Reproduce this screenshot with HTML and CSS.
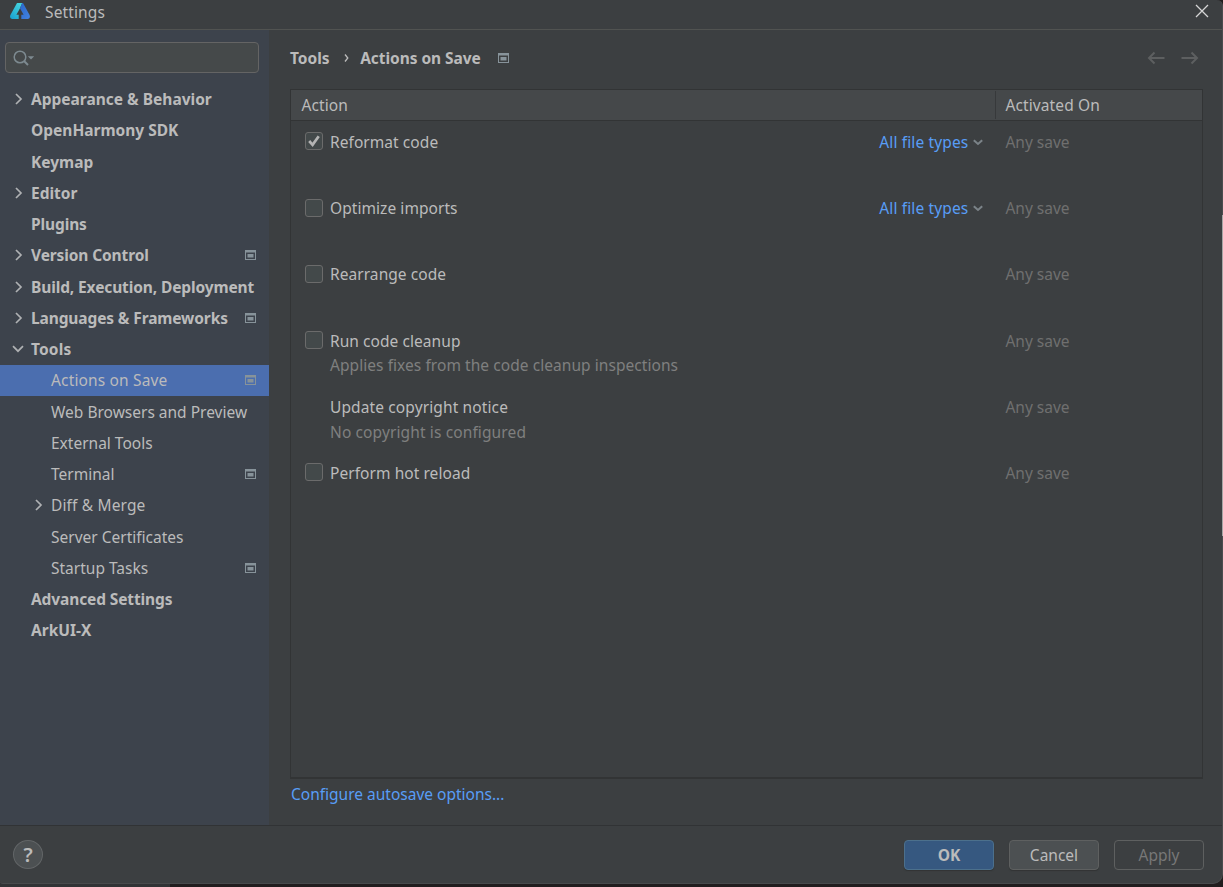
FILE: index.html
```html
<!DOCTYPE html>
<html lang="en">
<head>
<meta charset="utf-8">
<title>Settings</title>
<link rel="stylesheet" href="styles.css">
</head>
<body>
<svg class="defs" width="0" height="0">
  <symbol id="right" viewBox="0 0 10 12"><path d="M2 1 7 6 2 11" fill="none" stroke="currentColor" stroke-width="1.700"/></symbol>
  <symbol id="down" viewBox="0 0 12 8"><path d="M1 1.200 6 6.200 11 1.200" fill="none" stroke="currentColor" stroke-width="1.700"/></symbol>
  <symbol id="small-down" viewBox="0 0 10 7"><path d="M.8 1.200 5 5 9.200 1.200" fill="none" stroke="currentColor" stroke-width="2"/></symbol>
  <symbol id="project" viewBox="0 0 11 10"><path fill-rule="evenodd" d="M0 0H11V10H0ZM1 2.500V9H10V2.500Z" fill="currentColor"/><rect x="2.500" y="4" width="6" height="3.500" fill="currentColor"/></symbol>
</svg>
<div class="window">
  <header class="titlebar">
    <svg class="logo" viewBox="0 0 20 17">
      <defs>
        <linearGradient id="cyan" x1="0" y1="1" x2=".7" y2="0"><stop offset="0" stop-color="#189fd0"/><stop offset="1" stop-color="#43d2dc"/></linearGradient>
        <linearGradient id="blue" x1="0" y1="0" x2="1" y2="1"><stop offset="0" stop-color="#2a66c8"/><stop offset="1" stop-color="#4283e2"/></linearGradient>
      </defs>
      <path d="M7 0H12.200L10 5.200 6.400 11.800H8.700V16H2Q-.8 15.200 .4 12Z" fill="url(#cyan)"/>
      <path d="M10 5.200 12.200 0H13L19.600 12Q20.700 15.200 18 16H11.300V11.800H13.600Z" fill="url(#blue)"/>
    </svg>
    <span class="title">Settings</span>
    <svg class="close" viewBox="0 0 14 14"><path d="M1 1 13 13M13 1 1 13" stroke="#d6d6d6" stroke-width="1.300"/></svg>
  </header>
  <div class="body">
    <aside class="sidebar">
      <div class="search">
        <svg viewBox="0 0 22 16"><circle cx="7" cy="7" r="5.800" fill="none" stroke="#7d8a90" stroke-width="1.500"/><path d="M11 11 15 15" stroke="#7d8a90" stroke-width="1.900"/><path d="M14.800 6.200H21.200L18 9.500Z" fill="#7d8a90"/></svg>
      </div>
      <nav class="tree">
        <div class="item"><svg class="arrow"><use href="#right"/></svg><span>Appearance &amp; Behavior</span></div>
        <div class="item"><span>OpenHarmony SDK</span></div>
        <div class="item"><span>Keymap</span></div>
        <div class="item"><svg class="arrow"><use href="#right"/></svg><span>Editor</span></div>
        <div class="item tight"><span>Plugins</span></div>
        <div class="item tight"><svg class="arrow"><use href="#right"/></svg><span>Version Control</span><svg class="badge"><use href="#project"/></svg></div>
        <div class="item tight"><svg class="arrow"><use href="#right"/></svg><span>Build, Execution, Deployment</span></div>
        <div class="item tight"><svg class="arrow"><use href="#right"/></svg><span>Languages &amp; Frameworks</span><svg class="badge"><use href="#project"/></svg></div>
        <div class="item loose"><svg class="arrow open"><use href="#down"/></svg><span>Tools</span></div>
        <div class="item child selected loose"><span>Actions on Save</span><svg class="badge"><use href="#project"/></svg></div>
        <div class="item child"><span>Web Browsers and Preview</span></div>
        <div class="item child"><span>External Tools</span></div>
        <div class="item child"><span>Terminal</span><svg class="badge"><use href="#project"/></svg></div>
        <div class="item child loose"><svg class="arrow"><use href="#right"/></svg><span>Diff &amp; Merge</span></div>
        <div class="item child"><span>Server Certificates</span></div>
        <div class="item child"><span>Startup Tasks</span><svg class="badge"><use href="#project"/></svg></div>
        <div class="item tight"><span>Advanced Settings</span></div>
        <div class="item"><span>ArkUI-X</span></div>
      </nav>
    </aside>
    <main class="content">
      <div class="crumbs">
        <span>Tools</span>
        <svg class="sep" viewBox="0 0 5 8"><path d="M1 .5 3.800 4 1 7.500" fill="none" stroke="#bbb" stroke-width="1.300"/></svg>
        <span class="page">Actions on Save</span>
        <svg class="badge"><use href="#project"/></svg>
        <svg class="history" viewBox="0 0 52 14"><path d="M17.500 7H2M7.500 1.500 2 7 7.500 12.500M34.500 7H50M44.500 1.500 50 7 44.500 12.500" fill="none" stroke="#5d5f60" stroke-width="2"/></svg>
      </div>
      <div class="table">
        <div class="thead"><div class="c1">Action</div><div class="c2">Activated On</div></div>
        <div class="row"><span class="box"><svg viewBox="0 0 18 18"><path d="M4.200 9 7.600 12.800 13.700 4.200" fill="none" stroke="#b4b4b4" stroke-width="2.700"/></svg></span><div class="label">Reformat code</div><div class="types">All file types<svg><use href="#small-down"/></svg></div><div class="when">Any save</div></div>
        <div class="row"><span class="box"></span><div class="label">Optimize imports</div><div class="types">All file types<svg><use href="#small-down"/></svg></div><div class="when">Any save</div></div>
        <div class="row"><span class="box"></span><div class="label">Rearrange code</div><div class="when">Any save</div></div>
        <div class="row"><span class="box"></span><div class="label">Run code cleanup<small>Applies fixes from the code cleanup inspections</small></div><div class="when">Any save</div></div>
        <div class="row"><span class="box none"></span><div class="label wide">Update copyright notice<small>No copyright is configured</small></div><div class="when">Any save</div></div>
        <div class="row"><span class="box"></span><div class="label">Perform hot reload</div><div class="when">Any save</div></div>
      </div>
      <a class="configure">Configure autosave options...</a>
    </main>
  </div>
  <footer class="footer">
    <div class="help">?</div>
    <div class="btn ok">OK</div>
    <div class="btn">Cancel</div>
    <div class="btn apply">Apply</div>
  </footer>
</div>
<div class="edge"></div>
</body>
</html>
```

FILE: styles.css
```css
* { box-sizing: border-box; }
body {
  margin: 0;
  width: 1223px;
  height: 887px;
  overflow: hidden;
  position: relative;
  background: linear-gradient(90deg, #313335 170px, #211d1e 170px);
  font: 15.5px/22px "Noto Sans", "Open Sans", sans-serif;
  color: #bbbbbb;
}
.defs { position: absolute; }
svg { flex: none; display: block; }
.window {
  width: 1223px;
  height: 884px;
  display: flex;
  flex-direction: column;
  background: #3c3f41;
  border-radius: 0 6px 10px 3px;
  border-bottom: 1px solid #484a4c;
  border-right: 1px solid #4a4c4e;
  overflow: hidden;
}
.titlebar {
  height: 30px;
  flex: none;
  display: flex;
  align-items: flex-start;
  border-bottom: 1px solid #515351;
}
.logo { width: 20px; height: 17px; margin: 3px 0 0 10px; }
.title { margin: 1px 0 0 15px; letter-spacing: .12px; }
.close { width: 14px; height: 14px; margin: 4px 13px 0 auto; }
.body { height: 795px; flex: none; display: flex; }
.sidebar { width: 269px; background: #3d434c; padding-top: 12px; }
.search {
  width: 254px;
  height: 31px;
  margin-left: 5px;
  border: 1px solid #646464;
  border-radius: 4px;
  background: #45494a;
  padding: 7px 0 0 7px;
}
.search svg { width: 22px; height: 16px; }
.tree { margin-top: 10.6px; }
.item {
  height: 31.25px;
  padding: 0 13px 0 31px;
  display: flex;
  align-items: center;
  font-weight: 700;
  white-space: nowrap;
}
.item.child { font-weight: 400; padding-left: 51px; }
.tight { letter-spacing: -.12px; }
.loose { letter-spacing: .15px; }
.selected { background: #4b6eaf; }
.arrow { width: 10px; height: 12px; margin: 0 7.5px 0 -17.5px; color: #afb1b3; }
.arrow.open { width: 12px; height: 8px; margin: 0 7px 0 -19px; }
.badge { width: 11px; height: 10px; margin-left: auto; color: #87939a; }
.content { width: 953px; padding: 17px 19px 0 21px; }
.crumbs { height: 22px; display: flex; align-items: center; font-weight: 700; }
.sep { width: 5px; height: 8px; margin: 0 11px 0 14.5px; }
.page { letter-spacing: -.05px; }
.crumbs .badge { margin-left: 17.5px; }
.history { width: 52px; height: 14px; margin: 0 4px 0 auto; }
.table {
  width: 913px;
  height: 690px;
  margin-top: 20px;
  border: 1px solid #323435;
  border-bottom-width: 2px;
}
.thead { height: 31px; display: flex; align-items: center; background: #45484a; border-bottom: 1px solid #323435; letter-spacing: .12px; }
.c1 { width: 705px; padding: 3px 0 3px 10.4px; border-right: 1px solid #37393b; }
.c2 { padding-left: 9.4px; }
.row { height: 66.2px; padding: 10px 0 0 13.5px; display: flex; align-items: flex-start; white-space: nowrap; }
.box { width: 18px; height: 18px; margin: 1.4px 7.5px 0 0; border: 1px solid #6b6b6b; border-radius: 3px; background: #43494a; flex: none; }
.box svg { width: 18px; height: 18px; margin: -1px; }
.box.none { visibility: hidden; }
.label { flex: 1; letter-spacing: .06px; }
.wide { letter-spacing: .12px; }
small { display: block; font-size: inherit; line-height: 22px; margin-top: 2.1px; color: #7f7f7f; }
.wide small { margin-top: 3px; }
.types { display: flex; align-items: center; color: #589df6; margin-right: 22.500px; letter-spacing: .14px; }
.types svg { width: 10px; height: 7px; margin-left: 4.500px; color: #7b8388; }
.when { width: 196.600px; color: #6f6f6f; }
.configure { display: inline-block; margin: 4px 0 0 1px; color: #589df6; }
.footer { flex: 1; display: flex; align-items: flex-start; padding: 14px 18px 0 13px; border-top: 1px solid #313335; }
.help {
  width: 30px; height: 29px; margin-right: auto; border: 1px solid #626567; border-radius: 50%;
  background: #4c5052; text-align: center; font-size: 20px; font-weight: 600; line-height: 28px;
}
.btn {
  width: 90px; height: 30px; margin-left: 15px; border: 1px solid #5e6060; border-radius: 4px;
  background: #4c5052; text-align: center; line-height: 29px; box-shadow: 0 1px 1px #323435;
}
.ok { background: #365880; border-color: #4c708c; font-weight: 700; }
.apply { background: #3c3f41; color: #777; box-shadow: none; }
.edge { position: absolute; right: 0; top: 215px; width: 1px; height: 321px; background: #a5a5a5; }
```
